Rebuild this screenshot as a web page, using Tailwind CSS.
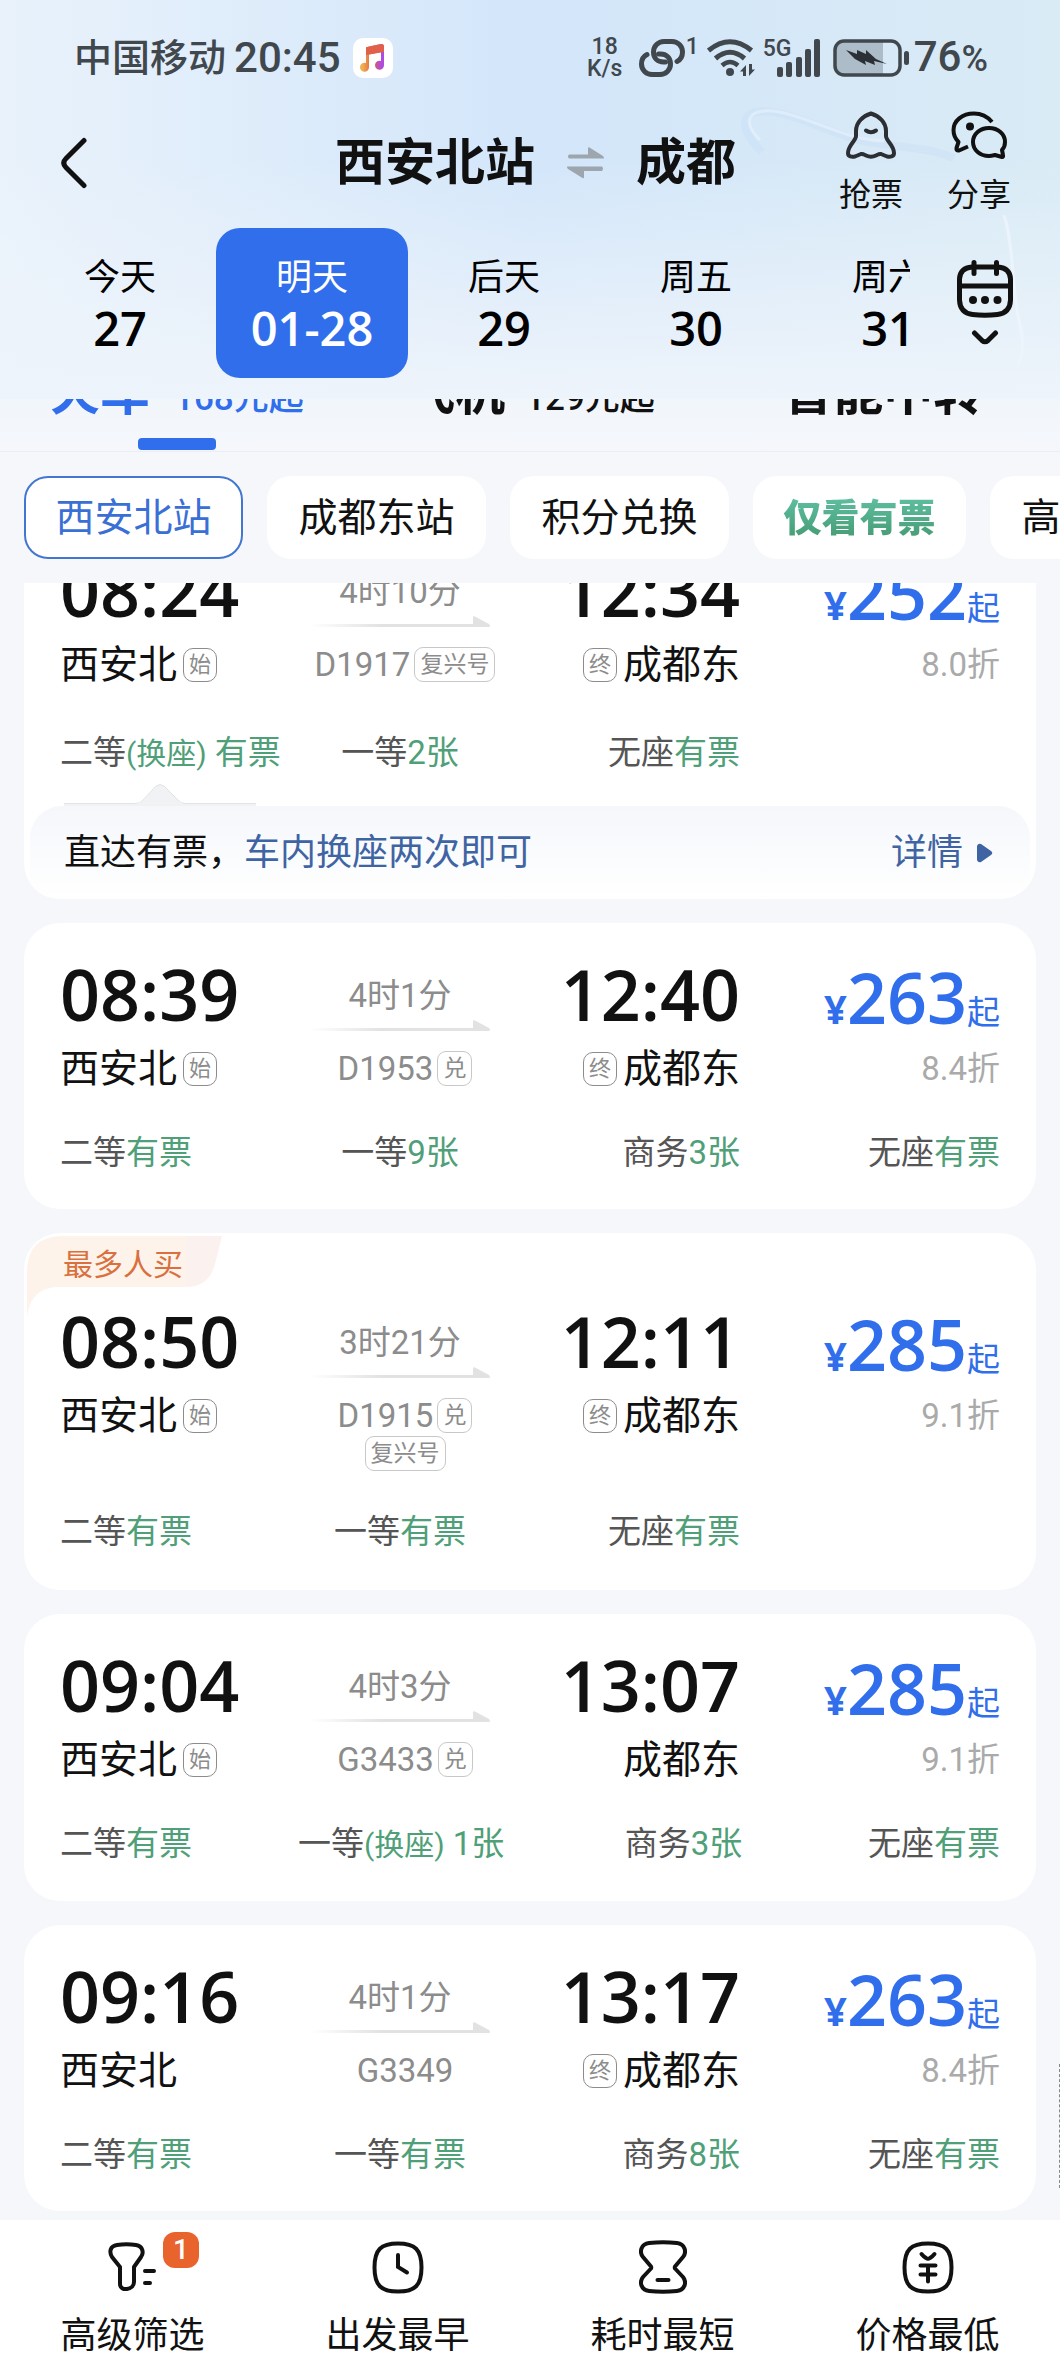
<!DOCTYPE html>
<html lang="zh-CN">
<head>
    <meta charset="UTF-8">
    <meta name="viewport" content="width=device-width, initial-scale=1.0">
    <title>西安北站 - 成都</title>
    <script src="https://cdn.jsdelivr.net/npm/@tailwindcss/browser@4"></script>
</head>
<body class="relative flex min-h-screen flex-col overflow-x-hidden bg-[#f5f7fb] font-[Roboto,'Noto_Sans_CJK_SC',sans-serif] text-[#111]">

    <!-- Header -->
    <header class="relative overflow-hidden bg-linear-to-r from-[#e9f2fb] via-[#d3e6fa] to-[#d9ebf5]">
        <div class="absolute inset-0 bg-linear-to-b from-transparent from-40% to-[#eef4fb]"></div>
        <svg class="absolute right-0 top-0 h-full w-[340px]" viewBox="0 0 340 399" preserveAspectRatio="none" fill="none" aria-hidden="true">
            <path d="M42 152c-30-30-18-48 20-38 40 10 60 26 100 30 30 4 54 6 72 14" stroke="#c3dbf8" stroke-width="8" opacity=".3"/>
            <path d="M40 140c-24-24-4-34 24-27 40 10 60 26 100 28" stroke="#eaf4fd" stroke-width="3" opacity=".6"/>
            <path d="M284 215c10 30 8 80 16 110 5 20 2 30-2 40" stroke="#edf5fd" stroke-width="3" opacity=".8"/>
        </svg>

        <div class="relative">
            <!-- Status bar -->
            <div class="flex items-center justify-between pt-8 pl-[74px] pr-[72px] h-[84px] text-[#40474d] font-medium">
                <div class="flex items-center">
                    <span class="text-[38px] leading-[52px]">中国移动</span>
                    <span class="ml-2 text-[42px] leading-[52px]">20:45</span>
                    <svg class="ml-3 size-10" viewBox="0 0 40 40" aria-hidden="true">
                        <defs>
                            <linearGradient id="note" x1="0" y1="1" x2="1" y2="1">
                                <stop offset=".1" stop-color="#f0b04a"/><stop offset=".5" stop-color="#e0604a"/><stop offset=".9" stop-color="#b04ae0"/>
                            </linearGradient>
                        </defs>
                        <rect width="40" height="40" rx="10" fill="#fff"/>
                        <path d="M14 9l14-3q3-.5 3 2.500V27a4.500 4.500 0 1 1-3-4V14l-12 2.500V29a4.500 4.500 0 1 1-3-4V10q0-1 1-1z" fill="url(#note)"/>
                        <path d="M14 9l14-3q3-.5 3 2.500V14l-18 3v-7q0-1 1-1z" fill="#e0604a"/>
                    </svg>
                </div>
                <div class="flex items-center">
                    <div class="w-[36px] text-center text-[23px] leading-[22px]"><span class="block">18</span><span class="block">K/s</span></div>
                    <svg class="ml-4 h-[38px] w-[46px]" viewBox="0 0 46 38" fill="none" stroke="currentColor" stroke-width="5" stroke-linecap="round" aria-hidden="true">
                        <path d="M8 15.500C4 17.500 2.500 21 2.500 25A10.500 10.500 0 0 0 13 35.500h8A10.500 10.500 0 0 0 31.500 25c0-6-4-10-10-10h-2"/>
                        <path d="M38 22.500c4-2 5.500-5.500 5.500-9.500A10.500 10.500 0 0 0 33 2.500h-8A10.500 10.500 0 0 0 14.500 13c0 6 4 10 10 10h2"/>
                    </svg>
                    <span class="ml-px self-start pt-1 text-[23px] leading-6">1</span>
                    <svg class="ml-2 h-[38px] w-[48px]" viewBox="0 0 48 38" fill="none" stroke="currentColor" stroke-width="5" aria-hidden="true">
                        <path d="M1.500 11.500Q23-6 44.500 11.500"/>
                        <path d="M8.500 19.500Q23 7 37.500 19.500"/>
                        <path d="M15 26.500q8-7 16 0" stroke-width="4.500"/>
                        <circle cx="23" cy="33" r="4" fill="currentColor" stroke="none"/>
                        <path d="M39 37V26l-6 6.500h3V37zM42 25v12l6-6.500h-3V25z" fill="currentColor" stroke="none"/>
                    </svg>
                    <div class="relative ml-2">
                        <span class="absolute left-0 top-0 text-[23px] leading-5">5G</span>
                        <svg class="h-[38px] w-[58px]" viewBox="0 0 58 38" fill="currentColor" aria-hidden="true">
                            <rect x="14" y="28" width="6" height="10" rx="2"/><rect x="23" y="23" width="6" height="15" rx="2"/><rect x="33" y="18" width="6" height="20" rx="2"/><rect x="42" y="10" width="6" height="28" rx="2"/><rect x="51" y="0" width="6" height="38" rx="2"/>
                        </svg>
                    </div>
                    <svg class="ml-3 h-[38px] w-[77px]" viewBox="0 0 77 38" aria-hidden="true">
                        <path d="M10 2h40v34H10q-8-1-8-9V11q0-8 8-9z" fill="#acbcc8"/>
                        <rect x="2" y="2" width="65" height="34" rx="9" fill="none" stroke="currentColor" stroke-width="3.500"/>
                        <rect x="71" y="12" width="5" height="14" rx="2.500" fill="currentColor"/>
                        <path d="M13 11l11 4v-4l9 4v-4l10 9 11 5-13-3 1 4-10-4 1 4-11-6z" fill="#2b3036"/>
                    </svg>
                    <span class="ml-1 text-[42px] leading-[52px]">76<span class="text-[36px]">%</span></span>
                </div>
            </div>

            <!-- Route title -->
            <div class="mt-[27px] grid h-[104px] grid-cols-[1fr_auto_1fr] items-center pl-[60px] pr-[49px]">
                <button type="button" aria-label="返回" class="w-8">
                    <svg class="h-[52px] w-7" viewBox="0 0 28 52" fill="none" stroke="currentColor" stroke-width="5" stroke-linecap="round" aria-hidden="true">
                        <path d="M24 3.500L6 21.500q-4.500 4.500 0 9L24 48.500"/>
                    </svg>
                </button>
                <h1 class="flex items-center gap-8 text-[50px] leading-[60px] font-bold">
                    <span>西安北站</span>
                    <svg class="h-[32px] w-[37px]" viewBox="0 0 37 32" fill="#9da6ae" aria-hidden="true">
                        <path d="M2 7.500h19V1q0-1 1.500-.5L36 9q1 1 1 2.500H2q-2-2 0-4z"/>
                        <path d="M35 24H17v6.500q0 1-1.500.5L1 22q-1-1-1-2.500h35q2 2 0 4.500z"/>
                    </svg>
                    <span>成都</span>
                </h1>
                <div class="flex justify-end gap-11 text-[32px] leading-[40px]">
                    <button type="button" class="flex flex-col items-center gap-4">
                        <svg class="h-[48px] w-[50px] text-[#2b2f33]" viewBox="0 0 50 48" fill="none" stroke="currentColor" stroke-width="4" stroke-linejoin="round" aria-hidden="true">
                            <path d="M25 2.500C17 5 10 11 10 20v5c0 5-8 9-8 17 0 4 4 4 7 3.500l6-2.500c2-.5 3 .5 5 1.500 3 1.500 7 1.500 10 0 2-1 3-2 5-1.500l6 2.500c3 .5 7 .5 7-3.500 0-8-8-12-8-17v-5c0-9-7-15-15-17.500z"/>
                            <path d="M20 19.500q5 3.500 10 0" stroke-linecap="round"/>
                        </svg>
                        <span>抢票</span>
                    </button>
                    <button type="button" class="flex flex-col items-center gap-4">
                        <svg class="h-[48px] w-[56px]" viewBox="0 0 56 48" fill="none" stroke="currentColor" stroke-width="4" stroke-linejoin="round" aria-hidden="true">
                            <path d="M41 11C36 5 30 2.500 23 2.500 11 2.500 2.500 10 2.500 19c0 5 2 9 5 12l-2 6q-.5 3 2.500 2.500l9-4"/>
                            <circle cx="19" cy="15.500" r="4" fill="currentColor" stroke="none"/>
                            <path d="M38 17c-9 0-16 6-16 14s7 14 16 14c2 0 4-.5 6-1l7 2q1.500 0 1-2l-1-5c2-2 3-5 3-8 0-8-7-14-16-14z"/>
                        </svg>
                        <span>分享</span>
                    </button>
                </div>
            </div>

            <!-- Date strip -->
            <div class="mt-[13px] flex items-start pb-[21px]">
                <nav class="flex flex-1 overflow-hidden pl-6 text-center text-black">
                    <button type="button" class="w-48 shrink-0 py-6">
                        <span class="block text-[36px] leading-[50px]">今天</span>
                        <span class="block text-[47px] leading-[50px] font-semibold font-['Open_Sans']">27</span>
                    </button>
                    <button type="button" class="h-[150px] w-48 shrink-0 rounded-3xl bg-[#306eec] py-6 text-white">
                        <span class="block text-[36px] leading-[50px]">明天</span>
                        <span class="block text-[47px] leading-[50px] font-semibold font-['Open_Sans']">01-28</span>
                    </button>
                    <button type="button" class="w-48 shrink-0 py-6">
                        <span class="block text-[36px] leading-[50px]">后天</span>
                        <span class="block text-[47px] leading-[50px] font-semibold font-['Open_Sans']">29</span>
                    </button>
                    <button type="button" class="w-48 shrink-0 py-6">
                        <span class="block text-[36px] leading-[50px]">周五</span>
                        <span class="block text-[47px] leading-[50px] font-semibold font-['Open_Sans']">30</span>
                    </button>
                    <button type="button" class="w-48 shrink-0 py-6">
                        <span class="block text-[36px] leading-[50px]">周六</span>
                        <span class="block text-[47px] leading-[50px] font-semibold font-['Open_Sans']">31</span>
                    </button>
                </nav>
                <button type="button" aria-label="日历" class="flex w-[150px] flex-col items-center gap-3 pt-8">
                    <svg class="h-[58px] w-[56px]" viewBox="0 0 56 58" fill="none" stroke="currentColor" stroke-width="5" stroke-linecap="round" aria-hidden="true">
                        <path d="M15 7h26q12 1 12.500 12v21q-.5 13-13 14.500-12.500 1.500-25 0Q3 53 2.500 40V19Q3 8 15 7z"/>
                        <path d="M3 26h50M17 2.500v11M39.500 2.500v11"/>
                        <g fill="currentColor" stroke="none"><circle cx="16" cy="40" r="4"/><circle cx="28" cy="40" r="4"/><circle cx="40.500" cy="40" r="4"/></g>
                    </svg>
                    <svg class="h-4 w-7" viewBox="0 0 28 16" fill="none" stroke="currentColor" stroke-width="5" stroke-linecap="round" aria-hidden="true">
                        <path d="M3.500 3l7.500 7.500q3 2.500 6 0L24.500 3"/>
                    </svg>
                </button>
            </div>
        </div>
    </header>

    <!-- Transport tabs, scrolled half way under the header -->
    <nav class="h-[53px] overflow-hidden border-b border-[#e9edf8] bg-linear-to-b from-[#f1f6fb] to-[#f5f7fb]">
        <div class="-mt-[38px] grid grid-cols-3 text-[50px] leading-[64px] font-bold">
            <button type="button" class="relative flex items-baseline gap-6 pl-[50px] h-[89px] text-[#306eec]">
                火车<span class="text-[35px] font-medium">168元起</span>
                <span class="absolute bottom-0 left-[138px] h-3 w-[78px] rounded-sm bg-[#306eec]"></span>
            </button>
            <button type="button" class="flex items-baseline justify-center gap-5">
                飞机<span class="text-[35px] font-medium">129元起</span>
            </button>
            <button type="button" class="flex items-baseline justify-center">智能中转</button>
        </div>
    </nav>

    <!-- Quick filters -->
    <div class="flex gap-6 overflow-hidden py-6 pl-6 text-[39px] leading-[56px]">
        <button type="button" class="w-[219px] shrink-0 rounded-3xl border-2 border-[#4276d0] bg-white h-[83px] text-[#3a70d6]">西安北站</button>
        <button type="button" class="w-[219px] shrink-0 rounded-3xl bg-white h-[83px]">成都东站</button>
        <button type="button" class="w-[219px] shrink-0 rounded-3xl bg-white h-[83px]">积分兑换</button>
        <button type="button" class="w-[213px] shrink-0 rounded-3xl bg-white h-[83px] text-[38px] font-black"><span class="bg-linear-to-b from-[#5fc0a2] to-[#459a72] bg-clip-text text-transparent">仅看有票</span></button>
        <button type="button" class="w-[219px] shrink-0 rounded-3xl bg-white h-[83px]">高铁动车</button>
    </div>

    <!-- Train list -->
    <main class="flex-1 overflow-hidden px-6">
        <div id="train-list" class="-mt-16 flex flex-col gap-6"></div>
    </main>

    <!-- Sort bar -->
    <footer class="grid h-[156px] grid-cols-4 bg-white text-[36px] leading-[48px]">
        <button type="button" class="relative flex flex-col items-center gap-[18px] pt-5">
            <svg class="h-[54px] w-[50px]" viewBox="0 0 50 54" fill="none" stroke="currentColor" stroke-width="4" stroke-linecap="round" stroke-linejoin="round" aria-hidden="true">
                <path d="M9 5q9.500-1.500 19 0c7 1 8 8 5 12l-7 10v15c0 8-14 10-14 2V27L4 17C1 12 2 6 9 5z"/>
                <path d="M37 31h9M37 43h5"/>
            </svg>
            高级筛选
            <span class="absolute left-[163px] top-3 size-9 rounded-xl bg-[#e9632c] text-center text-[28px] leading-9 font-medium text-white">1</span>
        </button>
        <button type="button" class="flex flex-col items-center gap-[18px] pt-5">
            <svg class="h-[54px] w-[52px]" viewBox="0 0 52 54" fill="none" stroke="currentColor" stroke-width="4" stroke-linecap="round" aria-hidden="true">
                <path d="M26 3.500c17 0 23.500 6 23.500 24S43 51.500 26 51.500 2.500 45.500 2.500 27.500 9 3.500 26 3.500z"/>
                <path d="M26 15v12l9 5.500"/>
            </svg>
            出发最早
        </button>
        <button type="button" class="flex flex-col items-center gap-[18px] pt-5">
            <svg class="h-[54px] w-[48px]" viewBox="0 0 48 54" fill="none" stroke="currentColor" stroke-width="4" stroke-linecap="round" stroke-linejoin="round" aria-hidden="true">
                <path d="M10 3q14-1.500 28 0c8 1 10 9 6 14l-8 9.500q-.5 1 0 2L44 37c4 5 2 13-6 14q-14 1.500-28 0C2 50 0 42 4 37l8-8.500q.5-1 0-2L4 17C0 12 2 4 10 3z"/>
                <path d="M18.500 40h11"/>
            </svg>
            耗时最短
        </button>
        <button type="button" class="flex flex-col items-center gap-[18px] pt-5">
            <svg class="h-[54px] w-[52px]" viewBox="0 0 52 54" fill="none" stroke="currentColor" stroke-width="4" stroke-linecap="round" aria-hidden="true">
                <path d="M26 3.500c17 0 23.500 6 23.500 24S43 51.500 26 51.500 2.500 45.500 2.500 27.500 9 3.500 26 3.500z"/>
                <path d="M19.500 14q2 2.500 4.500 4 2 1.500 4 0 2.500-1.500 4.500-4M18.500 25.500h15M18.500 34.500h15M26 26v15.500"/>
            </svg>
            价格最低
        </button>
    </footer>

    <!-- Edge handle -->
    <span class="absolute right-0 top-[2064px] h-[124px] w-px border-r border-dashed border-[#888]"></span>

    <script>
        const trains = [
            {
                dep: "08:24", arr: "12:34", time: "4时10分", no: "D1917", tags: ["复兴号"], start: true, end: true, price: 252, off: "8.0折",
                seats: [["二等", "有票", true], ["一等", "2张"], ["无座", "有票"]],
                notice: true
            },
            {
                dep: "08:39", arr: "12:40", time: "4时1分", no: "D1953", tags: ["兑"], start: true, end: true, price: 263, off: "8.4折",
                seats: [["二等", "有票"], ["一等", "9张"], ["商务", "3张"], ["无座", "有票"]]
            },
            {
                dep: "08:50", arr: "12:11", time: "3时21分", no: "D1915", tags: ["兑", "复兴号"], start: true, end: true, price: 285, off: "9.1折",
                seats: [["二等", "有票"], ["一等", "有票"], ["无座", "有票"]],
                hot: true
            },
            {
                dep: "09:04", arr: "13:07", time: "4时3分", no: "G3433", tags: ["兑"], start: true, end: false, price: 285, off: "9.1折",
                seats: [["二等", "有票"], ["一等", "1张", true], ["商务", "3张"], ["无座", "有票"]]
            },
            {
                dep: "09:16", arr: "13:17", time: "4时1分", no: "G3349", tags: [], start: false, end: true, price: 263, off: "8.4折",
                seats: [["二等", "有票"], ["一等", "有票"], ["商务", "8张"], ["无座", "有票"]]
            }
        ];

        const justify = ["justify-start", "justify-center", "justify-end", "justify-end"];

        const stationMark = (text) =>
            `<span class="flex size-[34px] items-center justify-center rounded-[10px] border border-[#8c8c8c] text-[22px] leading-none text-[#8c8c8c]">${text}</span>`;

        const trainTag = (text) =>
            `<span class="flex h-[35px] items-center rounded-[9px] border border-[#c8c8c8] px-[5px] text-[23px] leading-none text-[#8c8c8c]">${text}</span>`;

        const seatCell = ([name, left, change], i) => `
            <div class="flex items-baseline whitespace-nowrap text-[#555] ${justify[i]}">
                ${name}<span class="text-[#4f9f78]">${change ? '<span class="mr-2 text-[30px]">(换座)</span>' : ""}${left}</span>
            </div>`;

        const hotLabel = `
            <svg class="absolute left-[3px] top-[3px] h-[82px] w-[195px]" viewBox="0 0 195 82" aria-hidden="true">
                <path d="M0 82V36Q0 0 36 0H160V51H28Q2 54 0 82z" fill="#fdf3ea"/>
                <path d="M159 0h36l-7 28q-6 23-29 23z" fill="#fbf1ee"/>
            </svg>
            <span class="absolute left-[39px] top-[14px] text-[30px] leading-9 text-[#d9703e]">最多人买</span>`;

        const noticeBar = `
            <div class="relative mx-[6px] flex h-[93px] items-center rounded-t-[32px] bg-linear-to-b from-[#f5f7fb] to-white pl-[34px] pr-[37px] text-[36px] leading-[50px]">
                <svg class="absolute left-[34px] -top-[22px] h-[22px] w-[192px]" viewBox="0 0 192 22" aria-hidden="true">
                    <path d="M0 19.500h76L92 2q4-3 8 0l17 17.500h75V22H0z" fill="#f1f2f4"/>
                    <path d="M0 19.500h72q4 0 7-3.500L92 2q4-3 8 0l14 14q3 3.500 7 3.500h71" fill="none" stroke="#e2e3e5"/>
                </svg>
                直达有票，<span class="text-[#3f64a3]">车内换座两次即可</span>
                <a href="#" class="ml-auto flex items-center gap-[14px] text-[#3f64a3]">详情
                    <svg class="h-5 w-4" viewBox="0 0 16 20" fill="currentColor" aria-hidden="true"><path d="M0 3q1-3 4-2l10 7q2.500 2 0 4L4 19q-3 1-4-2z"/></svg>
                </a>
            </div>`;

        const padding = (t) => t.hot ? "pt-[73px] pb-9" : t.notice ? "pt-9 pb-[30px]" : "pt-9 pb-[34px]";

        document.getElementById("train-list").innerHTML = trains.map((t) => `
            <article class="relative overflow-hidden rounded-[36px] bg-white">
                ${t.hot ? hotLabel : ""}
                <div class="px-9 ${padding(t)}">
                    <div class="grid h-[70px] grid-cols-[24fr_20fr_24fr_26fr]">
                        <div class="text-[70px] leading-[70px] font-semibold font-['Open_Sans']">${t.dep}</div>
                        <div class="flex flex-col items-center pt-[17px] text-[33px] leading-[40px] text-[#8c8c8c]">
                            ${t.time}
                            <svg class="mt-1 h-3 w-[180px] shrink-0" viewBox="0 0 180 12" aria-hidden="true">
                                <defs><linearGradient id="fade-${t.no}"><stop offset="0" stop-color="#e2e2e2" stop-opacity="0"/><stop offset=".4" stop-color="#e2e2e2"/></linearGradient></defs>
                                <rect y="8" width="178" height="3" fill="url(#fade-${t.no})"/>
                                <path d="M163 11V1.500q0-2 2-1L179 8q1.500 1.500.5 3z" fill="#e2e2e2"/>
                            </svg>
                        </div>
                        <div class="text-right text-[70px] leading-[70px] font-semibold font-['Open_Sans']">${t.arr}</div>
                        <div class="flex items-baseline justify-end pt-[3px] text-[33px] leading-[70px] text-[#306eec]"><span class="text-[40px] font-bold font-['Open_Sans']">¥</span><span class="text-[70px] font-semibold font-['Open_Sans']">${t.price}</span>起</div>
                    </div>
                    <div class="mt-[17px] grid grid-cols-[24fr_20fr_24fr_26fr] text-[39px] leading-[46px]">
                        <div class="flex items-center gap-[6px] h-[46px]">西安北${t.start ? stationMark("始") : ""}</div>
                        <div class="flex flex-wrap content-start items-center justify-center gap-x-1 gap-y-px pt-[3px] pl-[10px] text-[33px] leading-[39px] text-[#8c8c8c]"><span>${t.no}</span>${t.tags.map(trainTag).join("")}</div>
                        <div class="flex items-center justify-end gap-[6px] h-[46px]">${t.end ? stationMark("终") : ""}成都东</div>
                        <div class="text-right text-[33px] text-[#aaa]">${t.off}</div>
                    </div>
                    <div class="${t.notice ? "mt-[43px]" : "mt-[39px]"} grid grid-cols-[24fr_20fr_24fr_26fr] text-[33px] leading-[44px]">
                        ${t.seats.map(seatCell).join("")}
                    </div>
                </div>
                ${t.notice ? noticeBar : ""}
            </article>`).join("");
    </script>

</body>
</html>
